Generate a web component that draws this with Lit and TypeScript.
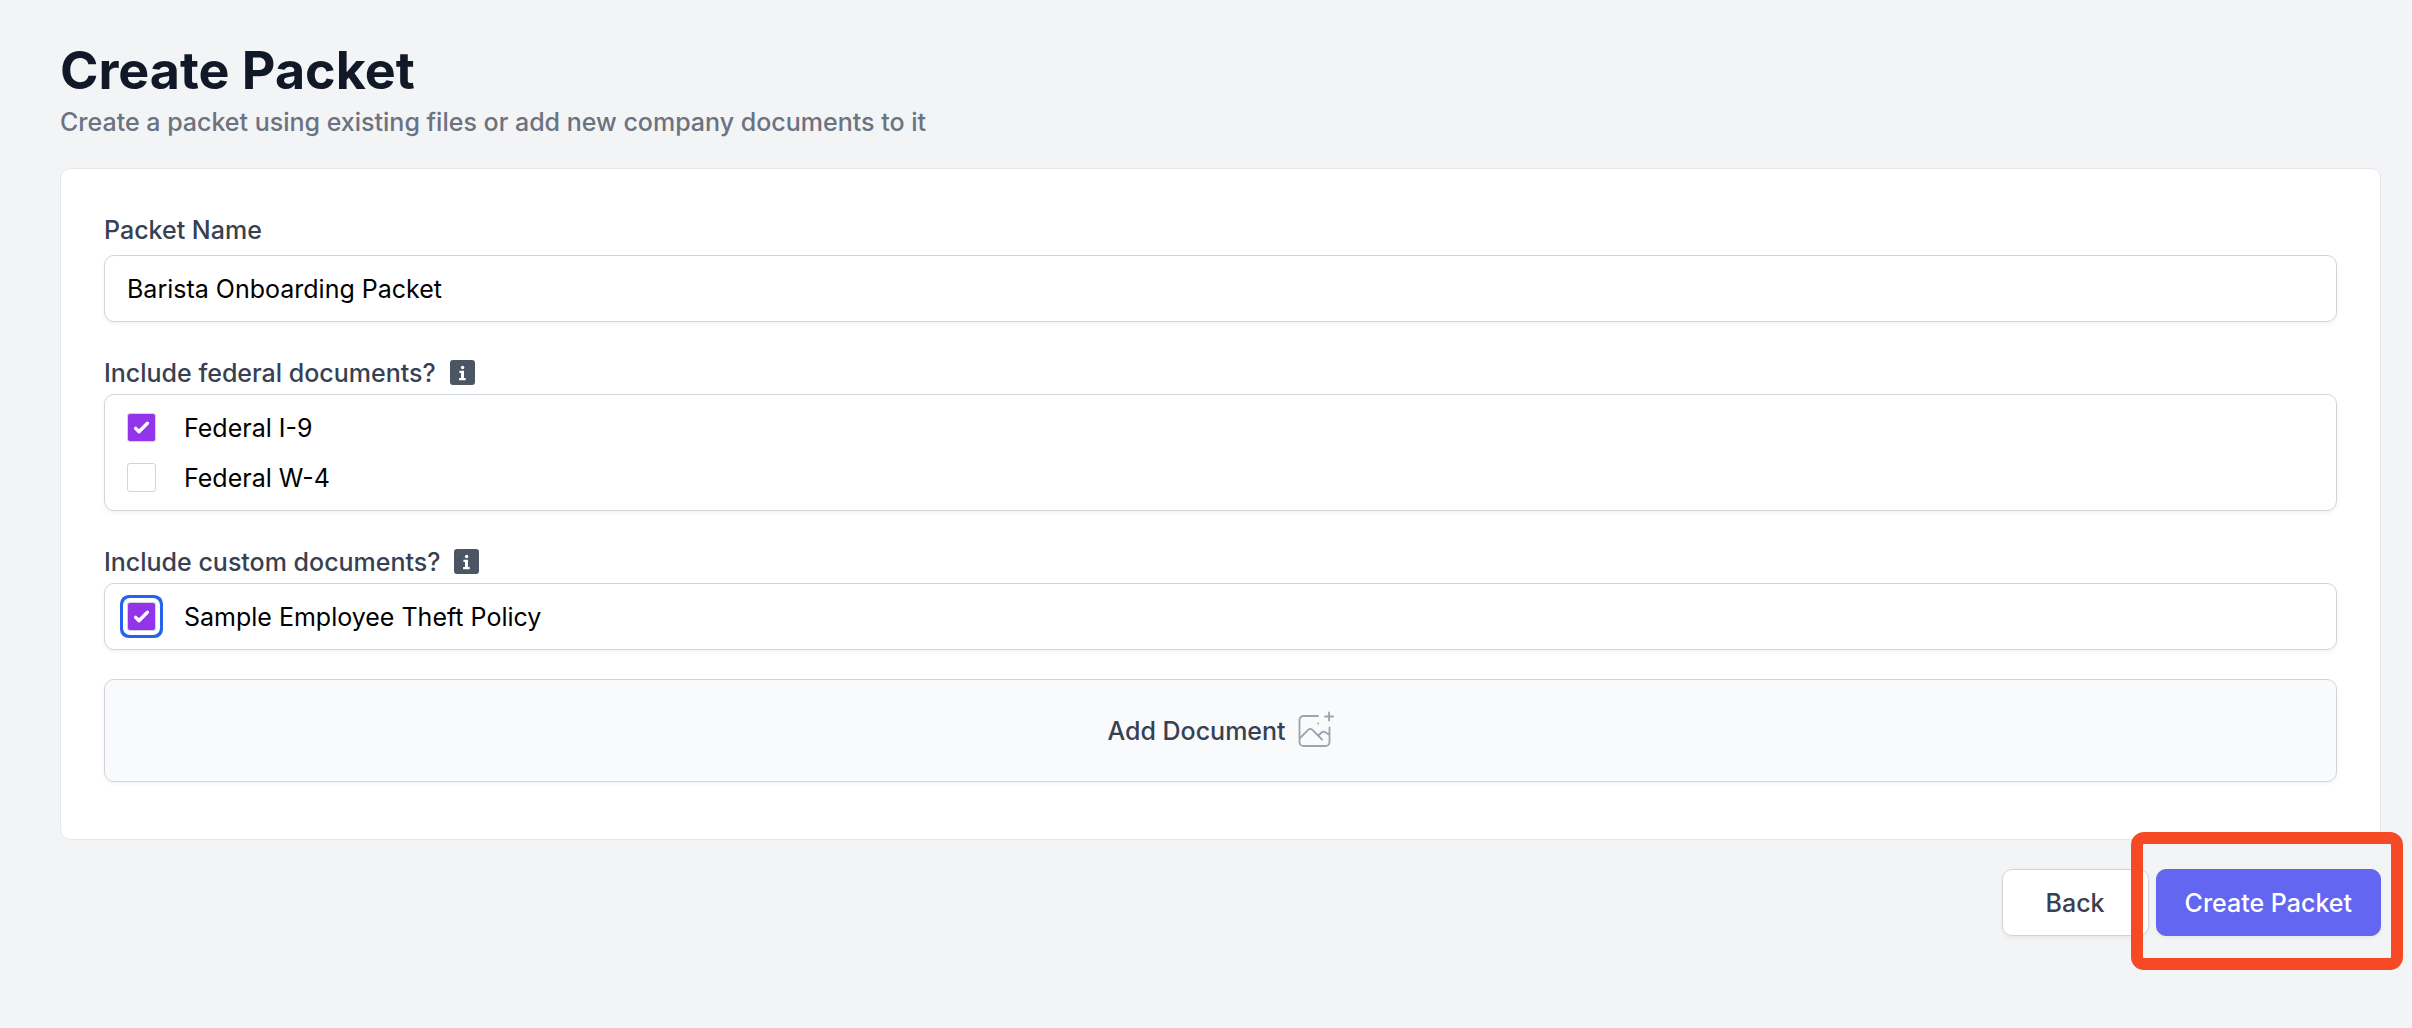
import { LitElement, html, css, svg } from "lit";
import { customElement, property, state } from "lit/decorators.js";

interface Doc {
  id: string;
  name: string;
  included: boolean;
  ring?: boolean;
}

@customElement("info-badge")
export class InfoBadge extends LitElement {
  @property() label = "";

  static styles = css`
    :host {
      display: inline-flex;
    }
    .badge {
      display: flex;
      margin: 0 0 1px;
      padding: 0;
      border: 0;
      background: none;
    }
    .icon {
      display: block;
      width: 25px;
      height: 25px;
    }
  `;

  render() {
    return html`
      <button class="badge" type="button" aria-label=${this.label}>
        <svg class="icon" viewBox="0 0 25 25" aria-hidden="true">
          <rect width="25" height="25" rx="3" fill="#4b5563" />
          <circle cx="12.6" cy="7.5" r="1.7" fill="#fff" />
          <path d="M9.4 10.8H14V18H15.7V20.2H9.1V18H11V13H9.4Z" fill="#fff" />
        </svg>
      </button>
    `;
  }
}

@customElement("document-list")
export class DocumentList extends LitElement {
  @property({ attribute: false }) docs: Doc[] = [];
  @property() label = "";
  @property() hint = "";

  static styles = css`
    :host {
      display: block;
    }
    .group {
      margin: 0;
      padding: 0;
      border: 0;
      min-width: 0;
    }
    .legend {
      display: flex;
      align-items: center;
      gap: 14px;
      padding: 0;
      margin-bottom: 3px;
      color: #374151;
      font-weight: 500;
    }
    .list {
      box-sizing: border-box;
      display: flex;
      flex-direction: column;
      gap: 14px;
      min-height: 67px;
      margin: 0;
      padding: 15px 22px 14px;
      border: 1px solid #d1d5db;
      border-radius: 10px;
      background: #fff;
      box-shadow: 0 2px 4px rgba(0, 0, 0, 0.05);
      list-style: none;
    }
    .item {
      display: flex;
      align-items: center;
      gap: 28px;
      color: #000;
    }
    .check {
      appearance: none;
      flex: none;
      width: 29px;
      height: 29px;
      margin: 0 0 1px;
      border: 1px solid #d1d5db;
      border-radius: 3px;
      background: #fff;
    }
    .check:checked {
      background: #9333ea
        url("data:image/svg+xml,%3Csvg viewBox='0 0 16 16' fill='white' xmlns='http://www.w3.org/2000/svg'%3E%3Cpath d='M12.207 4.793a1 1 0 010 1.414l-5 5a1 1 0 01-1.414 0l-2-2a1 1 0 011.414-1.414L6.5 9.086l4.293-4.293a1 1 0 011.414 0z'/%3E%3C/svg%3E")
        center / 100% 100% no-repeat;
    }
    .ring {
      box-shadow: 0 0 0 4px #fff, 0 0 0 7px #2563eb;
    }
  `;

  private toggle(id: string) {
    this.dispatchEvent(new CustomEvent("toggle-doc", { detail: id }));
  }

  render() {
    return html`
      <fieldset class="group">
        <legend class="legend">
          ${this.label}<info-badge label=${this.hint}></info-badge>
        </legend>
        <ul class="list">
          ${this.docs.map(
            (d) => html`
              <li class="item">
                <input
                  class="check ${d.ring ? "ring" : ""}"
                  type="checkbox"
                  id=${d.id}
                  .checked=${d.included}
                  @change=${() => this.toggle(d.id)}
                />
                <label for=${d.id}>${d.name}</label>
              </li>
            `
          )}
        </ul>
      </fieldset>
    `;
  }
}

const imagePlus = svg`
  <g fill="none" stroke="#9ca3af" stroke-width="1.8" stroke-linecap="round" stroke-linejoin="round">
    <path d="M20 5H5.5a4 4 0 0 0-4 4V31a4 4 0 0 0 4 4H27.5a4 4 0 0 0 4-4V16.5" />
    <path d="M2 27L10.4 18.6q1.9-1.5 3.8 0L24 28.5M20.500 24.500l3-3q2-1.800 4 0L31 23.500" />
    <path d="M31 1.5V9.5M27 5.5H35M20.2 12.5h.01" />
  </g>
`;

@customElement("app-root")
export class AppRoot extends LitElement {
  @state() private packetName = "Barista Onboarding Packet";
  @state() private federal: Doc[] = [
    { id: "i9", name: "Federal I-9", included: true },
    { id: "w4", name: "Federal W-4", included: false },
  ];
  @state() private custom: Doc[] = [
    { id: "theft", name: "Sample Employee Theft Policy", included: true, ring: true },
  ];

  static styles = css`
    :host {
      display: block;
      box-sizing: border-box;
      min-height: 100vh;
      padding: 38px 31px 36px 60px;
      background: #f3f4f6;
      font-family: Inter, "Liberation Sans", sans-serif;
      font-size: 25px;
      line-height: 36px;
    }
    .title {
      margin: 0;
      color: #111827;
      font-size: 52px;
      font-weight: 700;
      line-height: 66px;
    }
    .subtitle {
      margin: 0 0 28px;
      color: #6b7280;
      font-weight: 500;
    }
    .card {
      display: flex;
      flex-direction: column;
      gap: 33px;
      padding: 43px 43px 57px;
      border: 1px solid #e5e7eb;
      border-radius: 10px;
      background: #fff;
    }
    .field {
      display: flex;
      flex-direction: column;
      gap: 7px;
      color: #374151;
      font-weight: 500;
    }
    .text {
      box-sizing: border-box;
      width: 100%;
      height: 67px;
      padding: 0 22px;
      border: 1px solid #d1d5db;
      border-radius: 10px;
      background: #fff;
      box-shadow: 0 2px 4px rgba(0, 0, 0, 0.05);
      color: #000;
      font: inherit;
      font-weight: 400;
    }
    .documents {
      display: flex;
      flex-direction: column;
      gap: 29px;
    }
    .button {
      box-sizing: border-box;
      display: flex;
      align-items: center;
      justify-content: center;
      min-height: 67px;
      border: 1px solid #d1d5db;
      border-radius: 10px;
      background: #fff;
      box-shadow: 0 2px 4px rgba(0, 0, 0, 0.05);
      color: #374151;
      font: inherit;
      font-weight: 500;
    }
    .add {
      gap: 12px;
      min-height: 103px;
      background: #f9fafb;
    }
    .add-icon {
      width: 36px;
      height: 40px;
    }
    .actions {
      display: flex;
      justify-content: flex-end;
      gap: 7px;
      margin-top: 29px;
    }
    .back {
      padding: 0 43px;
    }
    .spot {
      position: relative;
    }
    .primary {
      padding: 0 28px;
      border-color: #6366f1;
      background: #6366f1;
      color: #fff;
    }
    .highlight {
      position: absolute;
      inset: -37px -22px -34px -25px;
      border: 12px solid #f54a25;
      border-radius: 13px;
      pointer-events: none;
    }
  `;

  private flip(docs: Doc[], id: string): Doc[] {
    return docs.map((d) => (d.id === id ? { ...d, included: !d.included } : d));
  }

  render() {
    return html`
      <main>
        <h1 class="title">Create Packet</h1>
        <p class="subtitle">
          Create a packet using existing files or add new company documents to it
        </p>
        <section class="card">
          <div class="field">
            <label for="packet-name">Packet Name</label>
            <input
              class="text"
              id="packet-name"
              type="text"
              .value=${this.packetName}
              @input=${(e: Event) => (this.packetName = (e.target as HTMLInputElement).value)}
            />
          </div>
          <document-list
            label="Include federal documents?"
            hint="About federal documents"
            .docs=${this.federal}
            @toggle-doc=${(e: CustomEvent) => (this.federal = this.flip(this.federal, e.detail))}
          ></document-list>
          <div class="documents">
            <document-list
              label="Include custom documents?"
              hint="About custom documents"
              .docs=${this.custom}
              @toggle-doc=${(e: CustomEvent) => (this.custom = this.flip(this.custom, e.detail))}
            ></document-list>
            <button class="button add" type="button">
              Add Document
              <svg class="add-icon" viewBox="0 0 36 40" aria-hidden="true">${imagePlus}</svg>
            </button>
          </div>
        </section>
        <div class="actions">
          <button class="button back" type="button">Back</button>
          <div class="spot">
            <button class="button primary" type="button">Create Packet</button>
            <div class="highlight"></div>
          </div>
        </div>
      </main>
    `;
  }
}
